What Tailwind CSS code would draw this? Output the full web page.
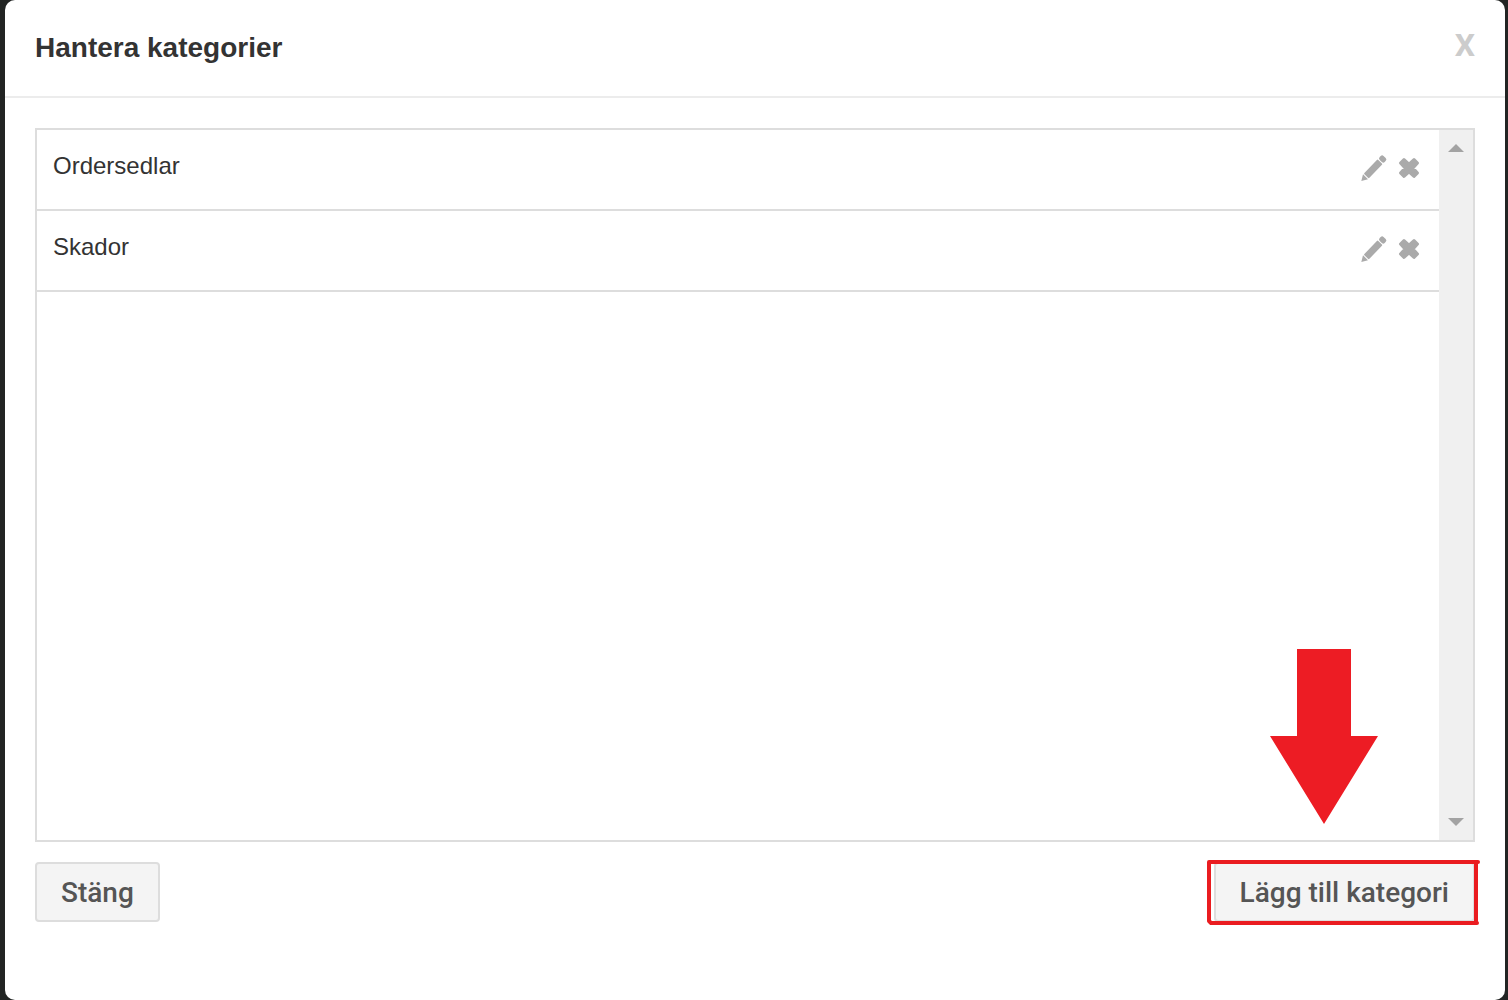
<!DOCTYPE html>
<html lang="sv">
<head>
<meta charset="utf-8">
<meta name="viewport" content="width=device-width, initial-scale=1">
<title>Hantera kategorier</title>
<script src="https://cdn.jsdelivr.net/npm/@tailwindcss/browser@4"></script>
</head>
<body class="bg-[#222423] font-['Liberation_Sans',Arial,sans-serif] text-[#333333]">
<svg class="hidden" aria-hidden="true">
  <symbol id="pencil" viewBox="0 0 28 28">
    <g transform="translate(12.500 14.500) rotate(-46)">
      <path d="M-17.500 0-11.500-3.500V3.500Z"/>
      <rect x="-10.500" y="-3.500" width="20" height="7" rx="1"/>
      <rect x="10.500" y="-3.500" width="5.500" height="7" rx="2"/>
    </g>
  </symbol>
  <symbol id="cross" viewBox="0 0 24 24">
    <path d="M3.500 7 7 3.500 12 8 17 3.500 20.500 7 16 12 20.500 17 17 20.500 12 16 7 20.500 3.500 17 8 12Z" stroke="currentColor" stroke-width="3" stroke-linejoin="round"/>
  </symbol>
</svg>
<div class="flex min-h-screen pl-[5px] pr-[3px]">
  <main role="dialog" aria-labelledby="title" class="flex flex-1 flex-col rounded-[10px] bg-white">
    <header class="flex h-[98px] items-center justify-between border-b-2 border-[#ececec] px-[30px]">
      <h1 id="title" class="text-[28px] leading-8 font-bold">Hantera kategorier</h1>
      <button type="button" aria-label="Stäng fönstret" class="pb-1.5 font-[Roboto,sans-serif] text-[32px] leading-8 font-bold text-[#cccccc]">X</button>
    </header>
    <div class="flex flex-1 flex-col gap-5 px-[30px] pt-[30px] pb-[78px]">
      <section class="relative flex flex-1 border-2 border-[#dddddd]">
        <ul class="flex-1 text-[24px] leading-7">
          <li class="flex h-[81px] items-start justify-between border-b-2 border-[#dddddd] py-[22px] pr-[18px] pl-4">
            <span>Ordersedlar</span>
            <span class="flex items-center gap-2 pt-0.5 text-[#aaaaaa]">
              <button type="button" aria-label="Redigera Ordersedlar"><svg class="size-7 fill-current"><use href="#pencil"/></svg></button>
              <button type="button" aria-label="Ta bort Ordersedlar"><svg class="size-6 fill-current"><use href="#cross"/></svg></button>
            </span>
          </li>
          <li class="flex h-[81px] items-start justify-between border-b-2 border-[#dddddd] py-[22px] pr-[18px] pl-4">
            <span>Skador</span>
            <span class="flex items-center gap-2 pt-0.5 text-[#aaaaaa]">
              <button type="button" aria-label="Redigera Skador"><svg class="size-7 fill-current"><use href="#pencil"/></svg></button>
              <button type="button" aria-label="Ta bort Skador"><svg class="size-6 fill-current"><use href="#cross"/></svg></button>
            </span>
          </li>
        </ul>
        <div class="flex w-[34px] flex-col items-center justify-between bg-[#f0f0f0] py-3.5" aria-hidden="true">
          <svg class="h-2 w-4 fill-[#a3a3a3]" viewBox="0 0 16 8"><path d="M0 8 8 0l8 8Z"/></svg>
          <svg class="h-2 w-4 fill-[#a3a3a3]" viewBox="0 0 16 8"><path d="M0 0h16L8 8Z"/></svg>
        </div>
        <svg class="absolute right-[95px] bottom-4 h-[175px] w-[108px] fill-[#ed1c24]" viewBox="0 0 108 175" aria-hidden="true"><path d="M27 0H81V87H108L54 175 0 87H27Z"/></svg>
      </section>
      <footer class="flex justify-between font-[Roboto,sans-serif] text-[28px] leading-8 font-medium text-[#555555]">
        <button type="button" class="h-[60px] rounded border-2 border-[#dddddd] bg-[#f4f4f4] px-6 pt-0.5">Stäng</button>
        <div class="relative">
          <button type="button" class="h-[60px] rounded border-2 border-[#dddddd] bg-[#f4f4f4] px-6 pt-0.5">Lägg till kategori</button>
          <svg class="pointer-events-none absolute -top-1 -right-1.5 h-[68px] w-[274px] fill-none stroke-[#ea1c20] stroke-4" viewBox="0 0 274 68" stroke-linecap="round" stroke-linejoin="round" aria-hidden="true"><path d="M271 4H2V63L4 65H270M269 4V65"/></svg>
        </div>
      </footer>
    </div>
  </main>
</div>
</body>
</html>
